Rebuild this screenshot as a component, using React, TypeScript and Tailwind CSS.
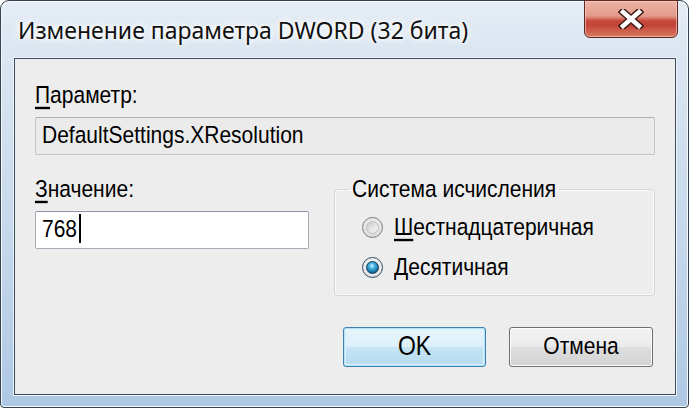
import React from "react";

function T({ children, className = "" }: { children: React.ReactNode; className?: string }) {
  return <span className={`inline-block scale-y-[1.18] ${className}`}>{children}</span>;
}

function Radio({ checked }: { checked?: boolean }) {
  if (checked) {
    return (
      <span className="w-[21px] h-[21px] shrink-0 rounded-full border border-[#2e4a62] bg-[radial-gradient(circle_at_50%_40%,#ffffff,#e4e4e4_70%,#c4cacf)] flex items-center justify-center">
        <span className="w-[13px] h-[13px] rounded-full border border-[#0c3a58] bg-[radial-gradient(circle_at_45%_35%,#d2f3ff_0%,#4ab6e6_28%,#1b78aa_62%,#0b456a_100%)]" />
      </span>
    );
  }
  return (
    <span className="w-[21px] h-[21px] shrink-0 rounded-full border border-[#7e7e7e] bg-[radial-gradient(circle_at_50%_40%,#f8f8f8,#e0e0e0_65%,#c6c6c6)] flex items-center justify-center">
      <span className="w-[13px] h-[13px] rounded-full border border-[#bdbdbd] bg-[linear-gradient(135deg,#c9c9c9,#e6e6e6_55%,#f6f6f6)]" />
    </span>
  );
}

export default function App() {
  return (
    <div className="w-[690px] h-[410px] bg-white [font-family:'Liberation_Sans',Arial,sans-serif] text-[21px] text-black">
      <div className="w-[689px] h-[408px] rounded-t-[9px] rounded-b-[4px] border border-[#34414f] shadow-[inset_0_0_0_1px_#f6f9fc] bg-[linear-gradient(180deg,#e6edf5_0%,#dbe6f1_12%,#c4d7eb_60%,#aec8e4_100%)] flex flex-col pl-[13px] pr-[12px] pb-[12px]">
        {/* Title bar */}
        <div className="h-[57px] flex items-start justify-between">
          <div className="pt-[14px] pl-[4px] leading-[30px] text-[23px] [font-family:'Noto_Sans','Open_Sans',sans-serif] text-[#111] [text-shadow:0_0_10px_#fff,0_0_6px_#fff,0_0_3px_#fff]">
            Изменение параметра DWORD (32 бита)
          </div>
          <div className="-mt-[1px] -mr-[2px] w-[94px] h-[38px] rounded-b-[6px] border border-[#5e2820] shadow-[inset_0_0_0_1px_rgba(255,220,210,0.55)] bg-[linear-gradient(180deg,#eeb4a6_0%,#e29a8a_42%,#c7493b_55%,#c4453a_68%,#d97a62_100%)] flex items-center justify-center">
            <svg width="26" height="20" viewBox="0 0 26 20">
              <path d="M5 3 L21 17 M21 3 L5 17" stroke="#3b1b16" strokeWidth="7.5" strokeLinecap="square" />
              <path d="M5 3 L21 17 M21 3 L5 17" stroke="#ffffff" strokeWidth="4.5" strokeLinecap="square" />
            </svg>
          </div>
        </div>

        {/* Client area */}
        <div className="h-[337px] border border-[#3c4d60] shadow-[0_0_0_1px_#eef4fa] bg-[#ededed] flex flex-col px-[20px]">
          <div className="pt-[23px] leading-[26px]">
            <T>
              <span className="underline underline-offset-[3px]">П</span>араметр:
            </T>
          </div>
          <div className="mt-[9px] h-[38px] rounded-[2px] border border-[#c3c3c3] border-t-[#b0b0b0] bg-[#ebebeb] flex items-center pl-[6px] pb-[3px]">
            <T>DefaultSettings.XResolution</T>
          </div>

          <div className="mt-[21px] flex justify-between">
            <div className="w-[274px] flex flex-col">
              <div className="leading-[26px]">
                <T>
                  <span className="underline underline-offset-[3px]">З</span>начение:
                </T>
              </div>
              <div className="mt-[9px] h-[38px] rounded-[2px] border border-[#a4adb6] border-t-[#8a96a3] bg-white flex items-center pl-[6px] pb-[3px]">
                <T>768</T>
                <span className="ml-[2px] w-[2px] h-[29px] bg-black" />
              </div>
            </div>

            <fieldset className="w-[321px] h-[120px] rounded-[4px] border border-[#cfd6dc] shadow-[inset_0_0_0_1px_#fafafa]">
              <legend className="ml-[14px] px-[3px] leading-[26px]">
                <T>Система исчисления</T>
              </legend>
              <div className="flex flex-col pl-[27px] pt-[5px]">
                <div className="h-[40px] flex items-center gap-[11px]">
                  <Radio />
                  <T>
                    <span className="underline underline-offset-[3px]">Ш</span>естнадцатеричная
                  </T>
                </div>
                <div className="h-[40px] flex items-center gap-[11px]">
                  <Radio checked />
                  <T>
                    <span className="underline underline-offset-[3px]">Д</span>есятичная
                  </T>
                </div>
              </div>
            </fieldset>
          </div>

          <div className="mt-[31px] flex justify-end gap-[23px] pr-[2px]">
            <div className="w-[143px] h-[40px] rounded-[3px] border border-[#3c7fb1] shadow-[inset_0_0_0_1px_#b4e3f8,inset_0_0_0_2px_#d8f1fc] bg-[linear-gradient(180deg,#e8f5fc_0%,#dcf0fa_48%,#c4e4f4_52%,#b6dcf0_100%)] flex items-center justify-center pb-[2px]">
              <T className="text-[23px]">OK</T>
            </div>
            <div className="w-[144px] h-[40px] rounded-[3px] border border-[#707070] shadow-[inset_0_0_0_1px_#fbfbfb] bg-[linear-gradient(180deg,#f3f3f3_0%,#ebebeb_48%,#dedede_52%,#d2d2d2_100%)] flex items-center justify-center pb-[2px]">
              <T>Отмена</T>
            </div>
          </div>
        </div>
      </div>
    </div>
  );
}
